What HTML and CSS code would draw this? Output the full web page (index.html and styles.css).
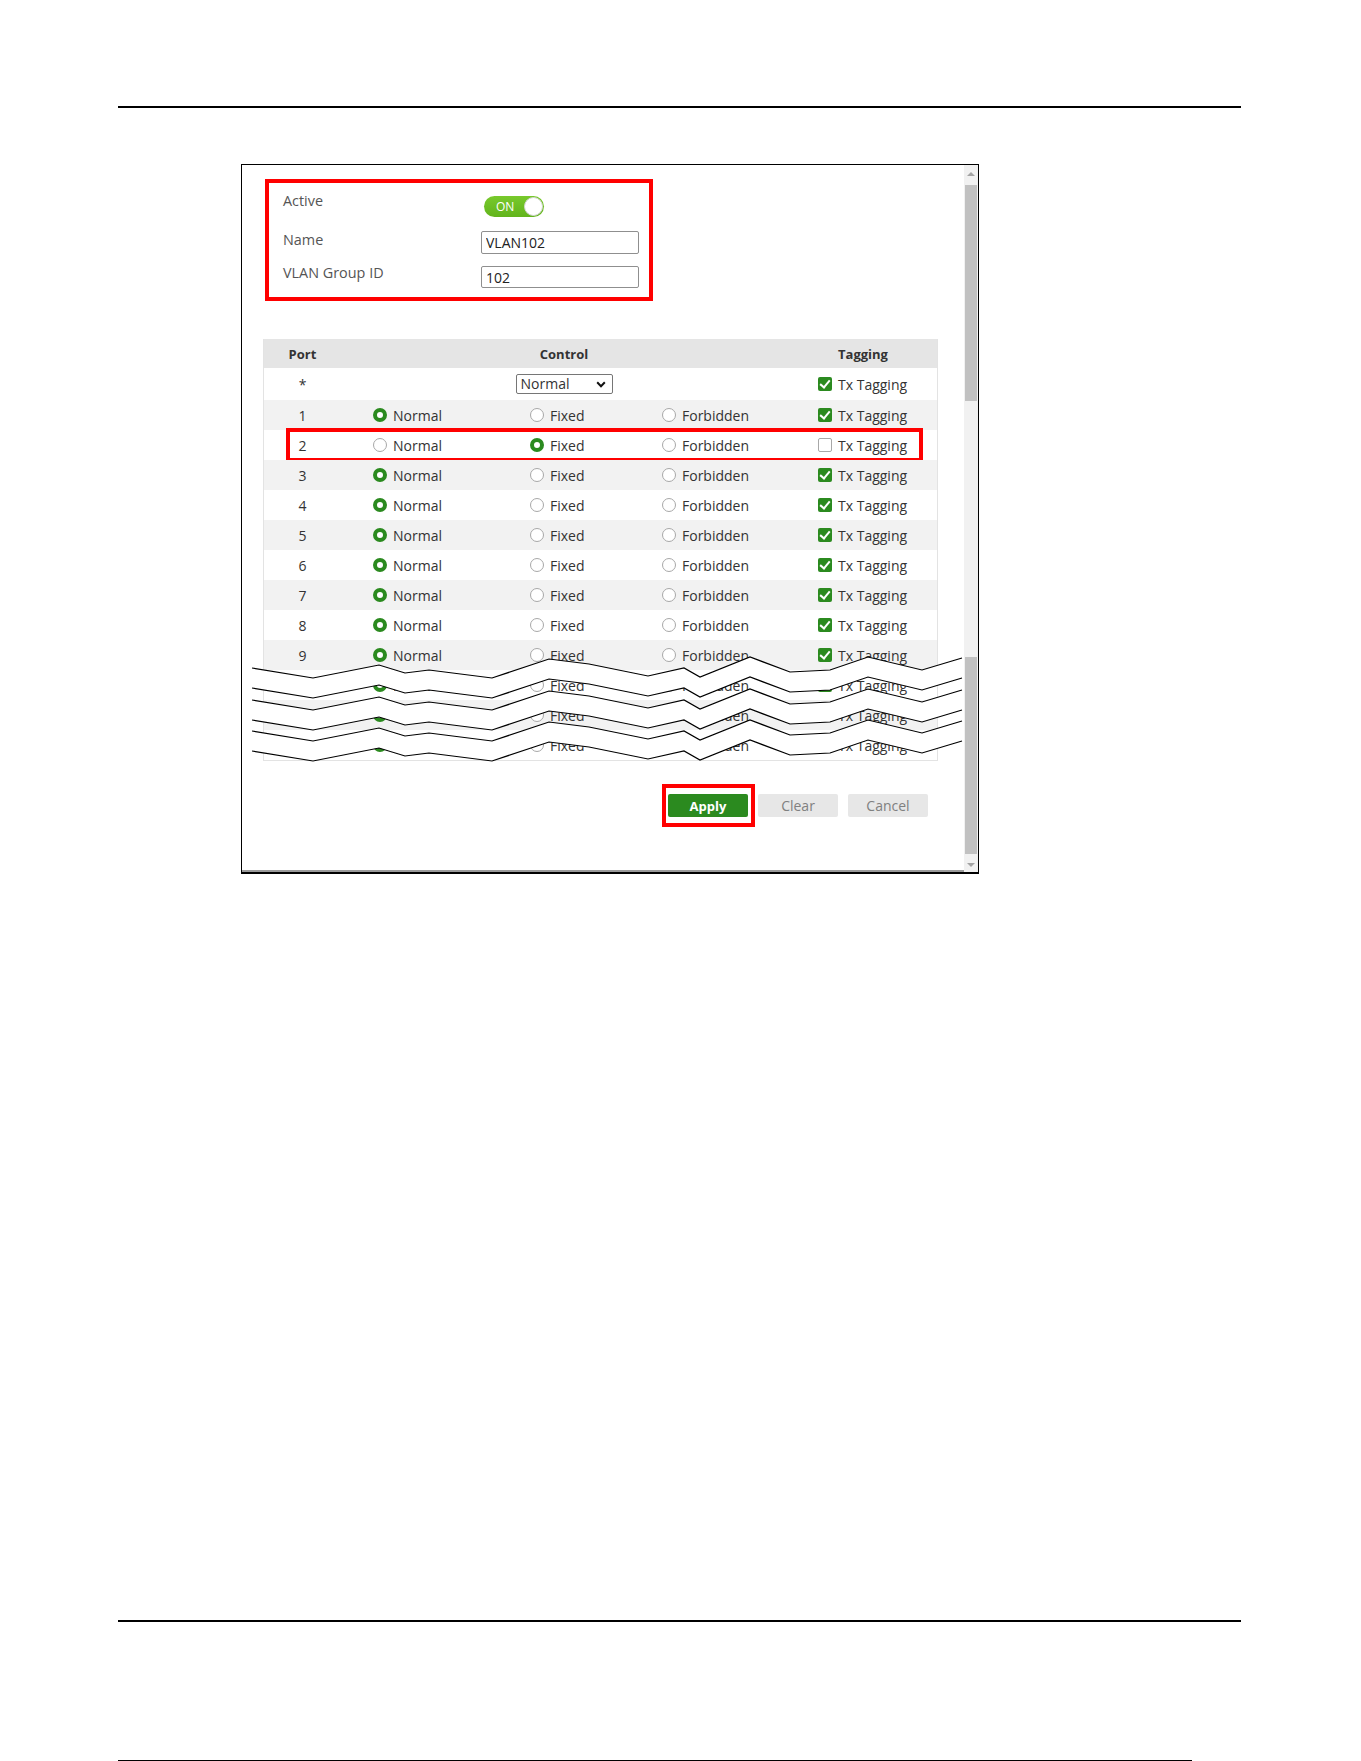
FILE: index.html
```html
<!doctype html>
<html lang="en">
<head>
  <meta charset="utf-8"/>
  <title>VLAN Setting</title>
  <meta name="viewport" content="width=device-width, initial-scale=1"/>
  <link rel="stylesheet" href="styles.css">
</head>
<body>
  <div class="page">
    <div class="rule"></div>

    <!-- screenshot frame -->
    <div class="frame">
      <div class="pane">

        <!-- general settings -->
        <div class="settings">
          <div class="field field-active">
            <span class="label">Active</span>
            <span class="switch"><span class="switch-text">ON</span><span class="knob"></span></span>
          </div>
          <div class="field field-name">
            <span class="label">Name</span>
            <input class="input" type="text" value="VLAN102">
          </div>
          <div class="field field-id">
            <span class="label">VLAN Group ID</span>
            <input class="input input-short" type="text" value="102">
          </div>
        </div>

        <!-- port table -->
        <div class="ports">
          <div class="row head">
            <span class="c-port">Port</span>
            <span class="c-control">Control</span>
            <span class="c-tag c-tag-head">Tagging</span>
          </div>
          <div class="row star">
            <span class="c-port">*</span>
            <span class="c-control">
              <span class="select">Normal
                <svg width="10" height="7" viewBox="0 0 10 7"><path d="M1.2 1.3 L5 5.2 L8.8 1.3" fill="none" stroke="#111" stroke-width="2"/></svg>
              </span>
            </span>
            <span class="c-tag"><span class="check"></span>Tx Tagging</span>
          </div>
          <div class="row odd">
            <span class="c-port">1</span>
            <span class="c-normal"><span class="radio on"></span>Normal</span>
            <span class="c-fixed"><span class="radio"></span>Fixed</span>
            <span class="c-forbid"><span class="radio"></span>Forbidden</span>
            <span class="c-tag"><span class="check"></span>Tx Tagging</span>
          </div>
          <div class="row marked">
            <span class="c-port">2</span>
            <span class="c-normal"><span class="radio"></span>Normal</span>
            <span class="c-fixed"><span class="radio on"></span>Fixed</span>
            <span class="c-forbid"><span class="radio"></span>Forbidden</span>
            <span class="c-tag"><span class="check off"></span>Tx Tagging</span>
          </div>
          <div class="row odd">
            <span class="c-port">3</span>
            <span class="c-normal"><span class="radio on"></span>Normal</span>
            <span class="c-fixed"><span class="radio"></span>Fixed</span>
            <span class="c-forbid"><span class="radio"></span>Forbidden</span>
            <span class="c-tag"><span class="check"></span>Tx Tagging</span>
          </div>
          <div class="row">
            <span class="c-port">4</span>
            <span class="c-normal"><span class="radio on"></span>Normal</span>
            <span class="c-fixed"><span class="radio"></span>Fixed</span>
            <span class="c-forbid"><span class="radio"></span>Forbidden</span>
            <span class="c-tag"><span class="check"></span>Tx Tagging</span>
          </div>
          <div class="row odd">
            <span class="c-port">5</span>
            <span class="c-normal"><span class="radio on"></span>Normal</span>
            <span class="c-fixed"><span class="radio"></span>Fixed</span>
            <span class="c-forbid"><span class="radio"></span>Forbidden</span>
            <span class="c-tag"><span class="check"></span>Tx Tagging</span>
          </div>
          <div class="row">
            <span class="c-port">6</span>
            <span class="c-normal"><span class="radio on"></span>Normal</span>
            <span class="c-fixed"><span class="radio"></span>Fixed</span>
            <span class="c-forbid"><span class="radio"></span>Forbidden</span>
            <span class="c-tag"><span class="check"></span>Tx Tagging</span>
          </div>
          <div class="row odd">
            <span class="c-port">7</span>
            <span class="c-normal"><span class="radio on"></span>Normal</span>
            <span class="c-fixed"><span class="radio"></span>Fixed</span>
            <span class="c-forbid"><span class="radio"></span>Forbidden</span>
            <span class="c-tag"><span class="check"></span>Tx Tagging</span>
          </div>
          <div class="row">
            <span class="c-port">8</span>
            <span class="c-normal"><span class="radio on"></span>Normal</span>
            <span class="c-fixed"><span class="radio"></span>Fixed</span>
            <span class="c-forbid"><span class="radio"></span>Forbidden</span>
            <span class="c-tag"><span class="check"></span>Tx Tagging</span>
          </div>
          <div class="row odd">
            <span class="c-port">9</span>
            <span class="c-normal"><span class="radio on"></span>Normal</span>
            <span class="c-fixed"><span class="radio"></span>Fixed</span>
            <span class="c-forbid"><span class="radio"></span>Forbidden</span>
            <span class="c-tag"><span class="check"></span>Tx Tagging</span>
          </div>
          <div class="row">
            <span class="c-port">10</span>
            <span class="c-normal"><span class="radio on"></span>Normal</span>
            <span class="c-fixed"><span class="radio"></span>Fixed</span>
            <span class="c-forbid"><span class="radio"></span>Forbidden</span>
            <span class="c-tag"><span class="check"></span>Tx Tagging</span>
          </div>
          <div class="row odd">
            <span class="c-port">11</span>
            <span class="c-normal"><span class="radio on"></span>Normal</span>
            <span class="c-fixed"><span class="radio"></span>Fixed</span>
            <span class="c-forbid"><span class="radio"></span>Forbidden</span>
            <span class="c-tag"><span class="check"></span>Tx Tagging</span>
          </div>
          <div class="row">
            <span class="c-port">12</span>
            <span class="c-normal"><span class="radio on"></span>Normal</span>
            <span class="c-fixed"><span class="radio"></span>Fixed</span>
            <span class="c-forbid"><span class="radio"></span>Forbidden</span>
            <span class="c-tag"><span class="check"></span>Tx Tagging</span>
          </div>
        </div>

        <div class="actions">
          <button class="btn btn-apply">Apply</button>
          <button class="btn">Clear</button>
          <button class="btn">Cancel</button>
        </div>

        <!-- torn-paper cut over the omitted rows -->
        <svg class="tear" width="721" height="707" viewBox="242 165 721 707">
          <defs>
            <g id="band">
              <path fill="#fff" d="M252,668 L313,678 L379,665 L405,673 L429,670 L492,678 L549,659 L589,664 L648,676 L684,668 L700,677 L750,657 L790,672 L830,670 L868,657 L922,670 L962,658 L962,678 L922,690 L868,677 L830,690 L790,692 L750,677 L700,697 L684,688 L648,696 L589,684 L549,679 L492,698 L429,690 L405,693 L379,685 L313,698 L252,688 Z"/>
              <polyline id="cut" fill="none" stroke="#000" stroke-width="1.2" points="252,668 313,678 379,665 405,673 429,670 492,678 549,659 589,664 648,676 684,668 700,677 750,657 790,672 830,670 868,657 922,670 962,658"/>
              <use href="#cut" y="20"/>
            </g>
          </defs>
          <use href="#band"/>
          <use href="#band" y="32"/>
          <use href="#band" y="63"/>
        </svg>
      </div>

      <div class="scrollbar">
        <span class="sb-arrow"><span class="tri up"></span></span>
        <span class="thumb thumb-top"></span>
        <span class="track"></span>
        <span class="thumb thumb-low"></span>
        <span class="sb-arrow sb-arrow-down"><span class="tri down"></span></span>
      </div>
    </div>

    <div class="rule rule-bottom"></div>
    <div class="edge"></div>
  </div>
</body>
</html>
```

FILE: styles.css
```css
:root{
  --green:#2b8a1f;
  --red:#f00;
  --text:#333;
  --label:#555;
}
html,body{margin:0;padding:0;background:#fff;overflow:hidden}
body{font-family:"Open Sans","Liberation Sans",sans-serif;font-size:14px;color:var(--text)}

.page{width:1123px;padding:106px 0 0 118px}
.rule{height:2px;background:#000}
.rule-bottom{margin-top:746px}
.edge{margin-top:138px;width:1074px;height:1px;background:#000}

/* ---------- FRAME ---------- */
.frame{
  margin:56px 0 0 123px;
  width:736px;
  height:707px;
  border:1px solid #000;
  border-bottom:2px solid #000;
  box-shadow:inset 0 -2px 0 #9a9a9a;
  display:flex;
}
.pane{flex:1;position:relative}

/* ---------- SETTINGS BOX ---------- */
.settings{
  box-sizing:border-box;
  width:388px;
  margin:14px 0 0 23px;
  border:4px solid var(--red);
  padding:0 0 9px 14px;
}
.field{display:flex;align-items:flex-start}
.label{width:198px;line-height:18px;color:var(--label);font-size:14.4px}
.field-active{padding-top:9px}
.field-active .switch{margin-top:4px}
.field-name{margin-top:14px}
.field-name .label{margin-top:0}
.field-id{margin-top:12px}
.field-id .label{margin-top:-2px}

.switch{
  box-sizing:border-box;
  width:60px;
  height:21px;
  margin:3px 0 0 3px;
  padding:0 1px 0 12px;
  border-radius:11px;
  background:linear-gradient(#78c92c,#62b41c);
  display:flex;
  align-items:center;
  justify-content:space-between;
}
.switch-text{color:#fff;font-size:12px;line-height:1}
.knob{
  box-sizing:border-box;
  width:19px;
  height:19px;
  border-radius:50%;
  background:#fff;
  border:1px solid #d6d6d6;
}

.input{
  box-sizing:border-box;
  width:158px;
  height:23px;
  margin:0;
  padding:0 4px;
  border:1px solid #8f8f8f;
  border-radius:2px;
  font:14px "Open Sans","Liberation Sans",sans-serif;
  color:#222;
  outline:none;
}
.input-short{height:22px}

/* ---------- PORT TABLE ---------- */
.ports{
  box-sizing:border-box;
  width:675px;
  margin:38px 0 0 21px;
  border:1px solid #e3e3e3;
  border-top:0;
}
.row{
  position:relative;
  display:grid;
  grid-template-columns:77px 32px 157px 132px 156px 90px 1fr;
  align-items:center;
  height:30px;
}
.row.odd{background:#f2f2f2}
.row.head{height:29px;background:#e5e5e5;font-weight:700;font-size:13px}
.row.star{height:32px}
.row.marked::after{
  content:"";
  position:absolute;
  left:22px;
  right:14px;
  top:-2px;
  bottom:-2px;
  border:4px solid var(--red);
}

.c-port{grid-column:1;text-align:center}
.c-control{grid-column:2 / 6;padding-right:31px;text-align:center;display:flex;justify-content:center}
.c-normal{grid-column:3}
.c-fixed{grid-column:4}
.c-forbid{grid-column:5}
.c-tag{grid-column:6}
.c-normal,.c-fixed,.c-forbid,.c-tag{display:flex;align-items:center;gap:6px;white-space:nowrap}
.c-tag-head{justify-content:center}

.select{
  box-sizing:border-box;
  width:97px;
  height:20px;
  padding:0 6px 0 4px;
  border:1px solid #767676;
  border-radius:2px;
  display:flex;
  align-items:center;
  justify-content:space-between;
  line-height:1;
}

.radio{
  box-sizing:border-box;
  width:14px;
  height:14px;
  border-radius:50%;
  border:1px solid #a8a8a8;
  background:#fff;
  flex-shrink:0;
}
.radio.on{border:4.5px solid var(--green)}

.check{
  position:relative;
  box-sizing:border-box;
  width:14px;
  height:14px;
  border-radius:2px;
  background:var(--green);
  flex-shrink:0;
}
.check::after{
  content:"";
  position:absolute;
  left:4px;
  top:1px;
  width:4px;
  height:8px;
  border:solid #fff;
  border-width:0 2px 2px 0;
  transform:rotate(40deg);
}
.check.off{background:#fff;border:1px solid #a8a8a8}
.check.off::after{display:none}

/* ---------- BUTTONS ---------- */
.actions{
  box-sizing:border-box;
  width:675px;
  margin:33px 0 0 21px;
  padding-right:10px;
  display:flex;
  justify-content:flex-end;
  gap:10px;
}
.btn{
  width:80px;
  height:23px;
  border:0;
  border-radius:2px;
  background:#e7e7e7;
  color:#808080;
  font:14px "Open Sans","Liberation Sans",sans-serif;
  padding:0;
}
.btn-apply{position:relative;background:var(--green);color:#fff;font-weight:700;font-size:13px}
.btn-apply::after{
  content:"";
  position:absolute;
  top:-10px;
  bottom:-10px;
  left:-6px;
  right:-7px;
  border:4px solid var(--red);
}

.tear{position:absolute;left:0;top:0;pointer-events:none}

/* ---------- SCROLLBAR ---------- */
.scrollbar{
  width:14px;
  background:#f1f1f1;
  display:flex;
  flex-direction:column;
  align-items:center;
}
.sb-arrow{height:17px;width:100%;display:flex;justify-content:center;align-items:center}
.sb-arrow-down{margin-top:auto;height:15px}
.tri{width:0;height:0;border-left:4px solid transparent;border-right:4px solid transparent}
.tri.up{border-bottom:4px solid #a3a3a3}
.tri.down{border-top:4px solid #a3a3a3}
.thumb{width:12px;background:#c1c1c1}
.thumb-top{margin-top:3px;height:216px}
.track{height:256px}
.thumb-low{height:197px}
```
